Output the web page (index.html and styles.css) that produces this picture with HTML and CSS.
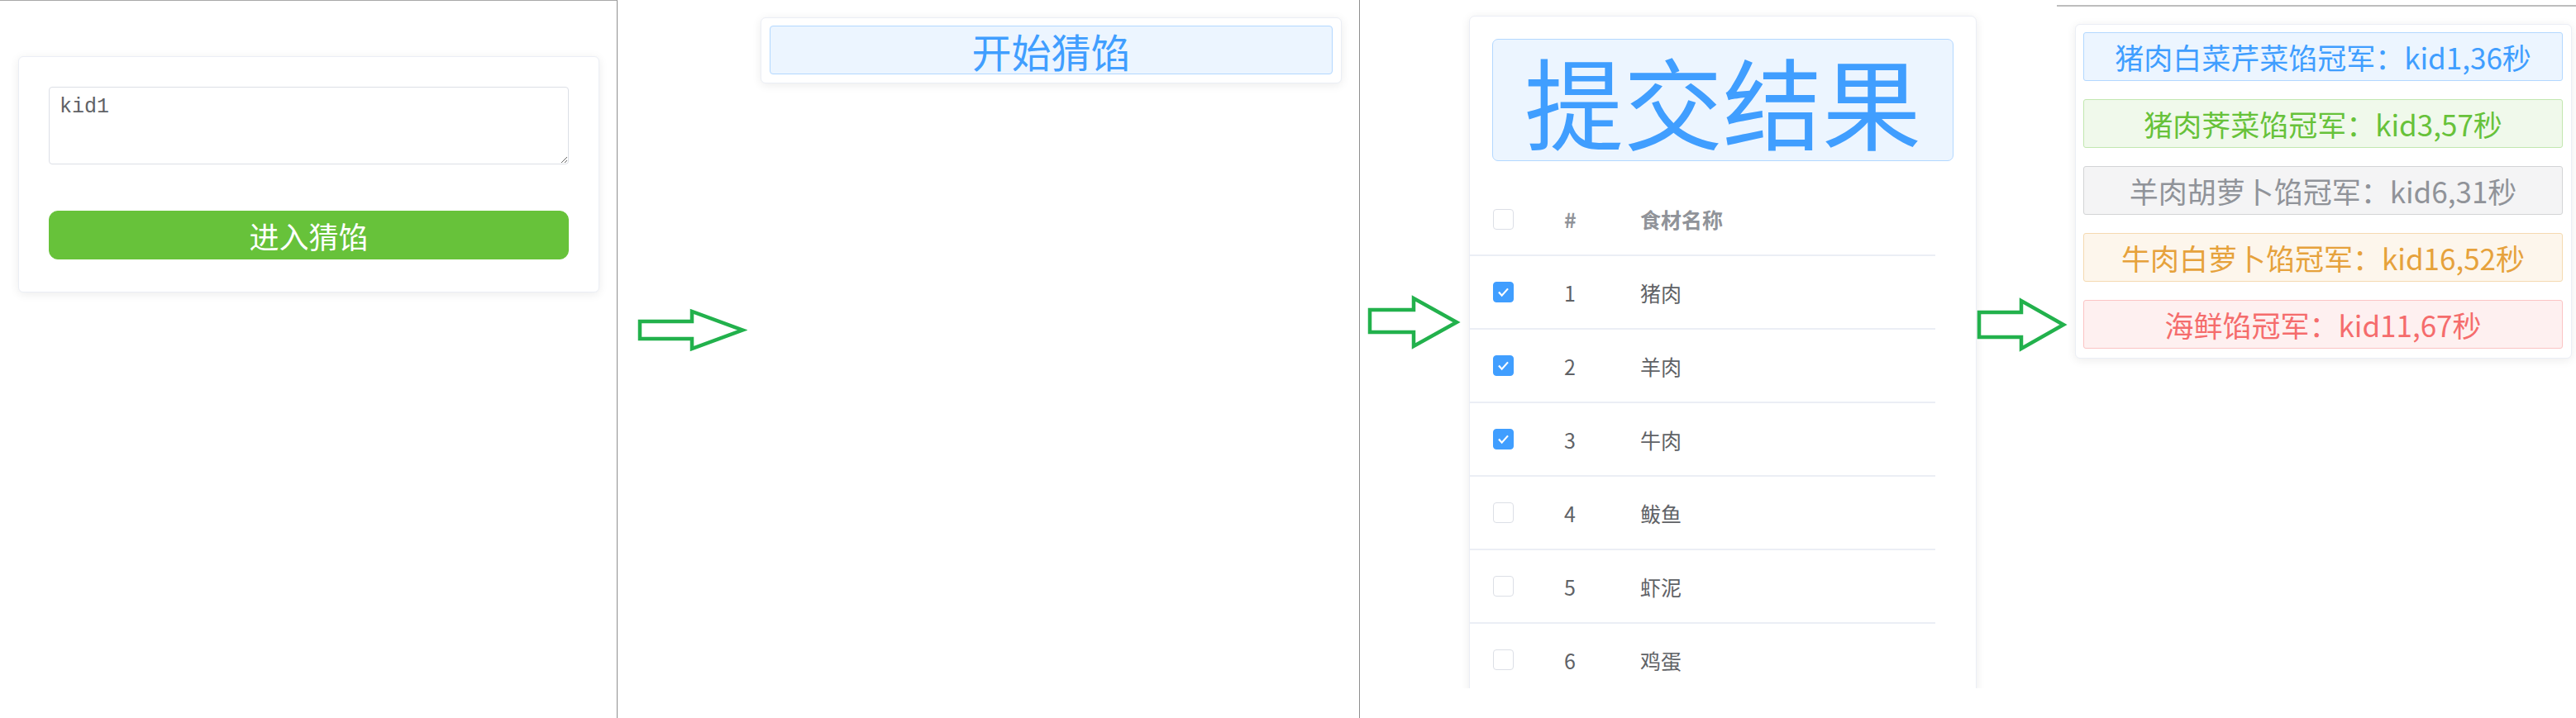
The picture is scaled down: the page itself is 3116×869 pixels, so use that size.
FILE: index.html
```html
<!DOCTYPE html>
<html lang="zh-CN">
<head>
<meta charset="utf-8">
<title>猜馅</title>
<link rel="stylesheet" href="styles.css">
</head>
<body>
<div class="board">
  <section class="pane pane-login">
    <div class="card card-login">
      <textarea class="kid-input">kid1</textarea>
      <button class="btn btn-success">进入猜馅</button>
    </div>
  </section>

  <section class="pane pane-start">
    <svg class="arrow arrow-1" width="136" height="57" viewBox="0 0 136 57"><polygon points="6,18 69,18 69,6 130,28.5 69,51 69,39 6,39"/></svg>
    <div class="card card-start">
      <button class="btn btn-plain btn-start">开始猜馅</button>
    </div>
  </section>

  <section class="pane pane-submit">
    <svg class="arrow arrow-2" width="117" height="70" viewBox="0 0 117 70"><polygon points="6,20 59,20 59,6 111,35 59,64 59,47 6,47"/></svg>
    <div class="shot">
      <div class="card card-submit">
        <button class="btn btn-plain btn-submit">提交结果</button>
        <div class="food-table">
          <div class="row row-head">
            <span class="check"></span><span>#</span><span>食材名称</span>
          </div>
          <div class="row">
            <span class="check is-checked"><svg viewBox="0 0 25 25"><polyline points="6.5,12.5 10.5,17 18.5,8"/></svg></span><span>1</span><span>猪肉</span>
          </div>
          <div class="row">
            <span class="check is-checked"><svg viewBox="0 0 25 25"><polyline points="6.5,12.5 10.5,17 18.5,8"/></svg></span><span>2</span><span>羊肉</span>
          </div>
          <div class="row">
            <span class="check is-checked"><svg viewBox="0 0 25 25"><polyline points="6.5,12.5 10.5,17 18.5,8"/></svg></span><span>3</span><span>牛肉</span>
          </div>
          <div class="row">
            <span class="check"></span><span>4</span><span>鲅鱼</span>
          </div>
          <div class="row">
            <span class="check"></span><span>5</span><span>虾泥</span>
          </div>
          <div class="row">
            <span class="check"></span><span>6</span><span>鸡蛋</span>
          </div>
        </div>
      </div>
    </div>
  </section>

  <section class="pane pane-result">
    <svg class="arrow arrow-3" width="114" height="70" viewBox="0 0 114 70"><polygon points="6,20 57,20 57,6 108,35 57,64 57,50 6,50"/></svg>
    <div class="card card-result">
      <button class="btn tag tag-primary">猪肉白菜芹菜馅冠军：kid1,36秒</button>
      <button class="btn tag tag-success">猪肉荠菜馅冠军：kid3,57秒</button>
      <button class="btn tag tag-info">羊肉胡萝卜馅冠军：kid6,31秒</button>
      <button class="btn tag tag-warning">牛肉白萝卜馅冠军：kid16,52秒</button>
      <button class="btn tag tag-danger">海鲜馅冠军：kid11,67秒</button>
    </div>
  </section>
</div>
</body>
</html>
```

FILE: styles.css
```css
* {
  box-sizing: border-box;
}

html,
body {
  margin: 0;
  padding: 0;
}

body {
  width: 3116px;
  height: 869px;
  overflow: hidden;
  background: #ffffff;
  font-family: "Noto Sans CJK SC", "Microsoft YaHei", sans-serif;
}

.board {
  display: flex;
  align-items: flex-start;
  height: 869px;
}

.pane {
  position: relative;
  flex: none;
  height: 869px;
}

.pane-login {
  width: 747px;
  border-top: 1px solid #a8a8a8;
  border-right: 1px solid #8e8e8e;
}

.pane-start {
  width: 898px;
  border-right: 1px solid #8e8e8e;
}

.pane-submit {
  width: 843px;
}

.pane-result {
  width: 628px;
  height: 863px;
  margin-top: 6px;
  border-top: 2px solid #bdbdbd;
}

/* cards */
.card {
  background: #ffffff;
  border: 1px solid #ebeef5;
  border-radius: 6px;
  box-shadow: 0 2px 12px rgba(0, 0, 0, 0.08);
}

.card-login {
  width: 703px;
  margin: 67px 0 0 22px;
  padding: 36px 36px 39px;
  display: flex;
  flex-direction: column;
  gap: 56px;
}

.kid-input {
  display: block;
  width: 100%;
  height: 94px;
  margin: 0;
  padding: 6px 12px;
  border: 1px solid #dcdfe6;
  border-radius: 4px;
  font-family: "Liberation Mono", "Courier New", monospace;
  font-size: 25px;
  line-height: 36px;
  color: #606266;
  background: #ffffff;
  resize: vertical;
  outline: none;
}

.btn {
  display: flex;
  align-items: center;
  justify-content: center;
  width: 100%;
  margin: 0;
  padding: 0;
  font-family: inherit;
  line-height: 1;
  white-space: nowrap;
  cursor: pointer;
}

.btn-success {
  height: 59px;
  background: #67c23a;
  border: 1px solid #67c23a;
  border-radius: 11px;
  color: #ffffff;
  font-size: 36px;
}

.btn-plain {
  background: #ecf5ff;
  border: 1px solid #b3d8ff;
  color: #409eff;
  border-radius: 4px;
}

.card-start {
  width: 703px;
  margin: 21px 0 0 173px;
  padding: 9px 10px 10px;
}

.btn-start {
  height: 59px;
  font-size: 48px;
}

/* submit pane */
.shot {
  height: 833px;
  overflow: hidden;
  padding: 19px 0 0 132px;
}

.card-submit {
  width: 614px;
  padding-top: 27px;
  border-radius: 7px;
}

.btn-submit {
  width: calc(100% - 54px);
  height: 148px;
  margin: 0 27px;
  font-size: 120px;
  border-radius: 7px;
}

.food-table {
  width: 563px;
  margin-top: 27px;
}

.row {
  display: grid;
  grid-template-columns: 86px 92px 1fr;
  align-items: center;
  height: 89px;
  padding-left: 28px;
  border-bottom: 2px solid #ebeef5;
  font-size: 25px;
  color: #606266;
}

.row-head {
  height: 88px;
  font-weight: bold;
  color: #909399;
}

.check {
  display: flex;
  align-items: center;
  justify-content: center;
  width: 25px;
  height: 25px;
  border: 1px solid #dcdfe6;
  border-radius: 4px;
  background: #ffffff;
}

.check.is-checked {
  background: #409eff;
  border-color: #409eff;
}

.check svg {
  width: 25px;
  height: 25px;
  fill: none;
  stroke: #ffffff;
  stroke-width: 2.4;
}

/* result pane */
.card-result {
  width: 601px;
  margin: 21px 0 0 22px;
  padding: 9px 10px 11px 9px;
  display: flex;
  flex-direction: column;
  gap: 22px;
}

.tag {
  height: 59px;
  font-size: 35px;
  border-radius: 3px;
  border: 1px solid;
}

.tag-primary {
  background: #ecf5ff;
  border-color: #b3d8ff;
  color: #409eff;
}

.tag-success {
  background: #f0f9eb;
  border-color: #c2e7b0;
  color: #67c23a;
}

.tag-info {
  background: #f4f4f5;
  border-color: #d3d4d6;
  color: #909399;
}

.tag-warning {
  background: #fdf6ec;
  border-color: #f5dab1;
  color: #e6a23c;
}

.tag-danger {
  background: #fef0f0;
  border-color: #fbc4c4;
  color: #f56c6c;
}

/* annotation arrows */
.arrow {
  position: absolute;
  z-index: 2;
  fill: none;
  stroke: #22b14c;
  stroke-width: 4.5;
  stroke-linejoin: miter;
}

.arrow-1 {
  left: 21px;
  top: 371px;
}

.arrow-2 {
  left: 6px;
  top: 355px;
}

.arrow-3 {
  left: -100px;
  top: 350px;
}
```
